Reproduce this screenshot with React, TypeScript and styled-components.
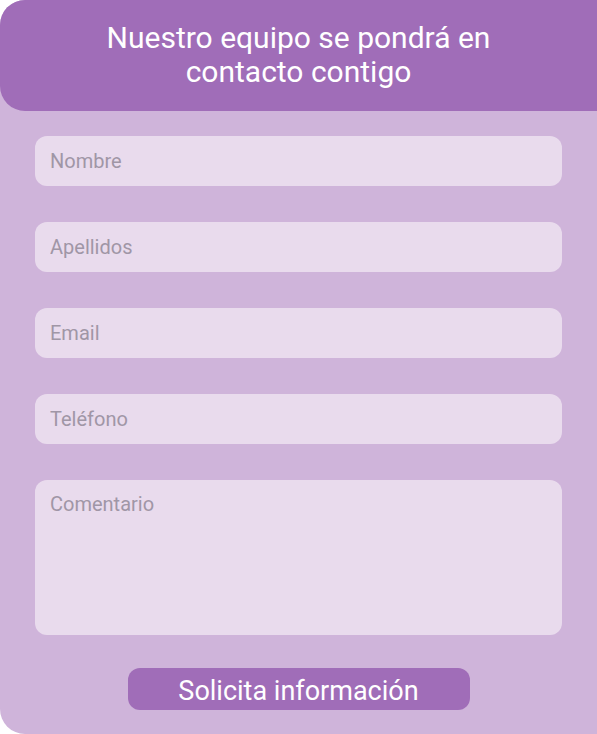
import React from "react";
import styled, { createGlobalStyle } from "styled-components";

const Global = createGlobalStyle`
  html, body { margin: 0; padding: 0; background: #ffffff; }
  * { box-sizing: border-box; }
`;

const Card = styled.div`
  width: 597px;
  height: 734px;
  background: #cfb4da;
  border-radius: 25px 0 0 25px;
  display: flex;
  flex-direction: column;
  font-family: Roboto, "Liberation Sans", sans-serif;
`;

const Header = styled.div`
  height: 111px;
  background: #a06db8;
  border-radius: 25px 0 0 25px;
  display: flex;
  align-items: center;
  justify-content: center;
  padding-bottom: 2px;
`;

const Title = styled.h1`
  margin: 0;
  color: #ffffff;
  font-weight: 400;
  font-size: 30px;
  line-height: 34px;
  text-align: center;
  width: 440px;
`;

const Form = styled.form`
  display: flex;
  flex-direction: column;
  gap: 36px;
  padding: 25px 35px 0;
`;

const fieldStyles = `
  width: 100%;
  border: none;
  outline: none;
  background: #e9dbed;
  border-radius: 12px;
  font-family: Roboto, "Liberation Sans", sans-serif;
  font-size: 20px;
  color: #555;
  padding: 0 15px;
  &::placeholder { color: #a096a6; }
`;

const Input = styled.input`
  ${fieldStyles}
  height: 50px;
`;

const TextArea = styled.textarea`
  ${fieldStyles}
  height: 155px;
  padding-top: 12px;
  resize: none;
  line-height: 24px;
`;

const Actions = styled.div`
  display: flex;
  justify-content: center;
  margin-top: -3px;
`;

const Button = styled.button`
  width: 342px;
  height: 42px;
  border: none;
  border-radius: 12px;
  background: #a06db8;
  color: #ffffff;
  font-family: Roboto, "Liberation Sans", sans-serif;
  font-size: 27px;
  padding: 3px 0 0;
  cursor: pointer;
`;

export default function App() {
  return (
    <>
      <Global />
      <Card>
        <Header>
          <Title>Nuestro equipo se pondrá en contacto contigo</Title>
        </Header>
        <Form onSubmit={(e) => e.preventDefault()}>
          <Input placeholder="Nombre" />
          <Input placeholder="Apellidos" />
          <Input placeholder="Email" />
          <Input placeholder="Teléfono" />
          <TextArea placeholder="Comentario" />
          <Actions>
            <Button type="submit">Solicita información</Button>
          </Actions>
        </Form>
      </Card>
    </>
  );
}
